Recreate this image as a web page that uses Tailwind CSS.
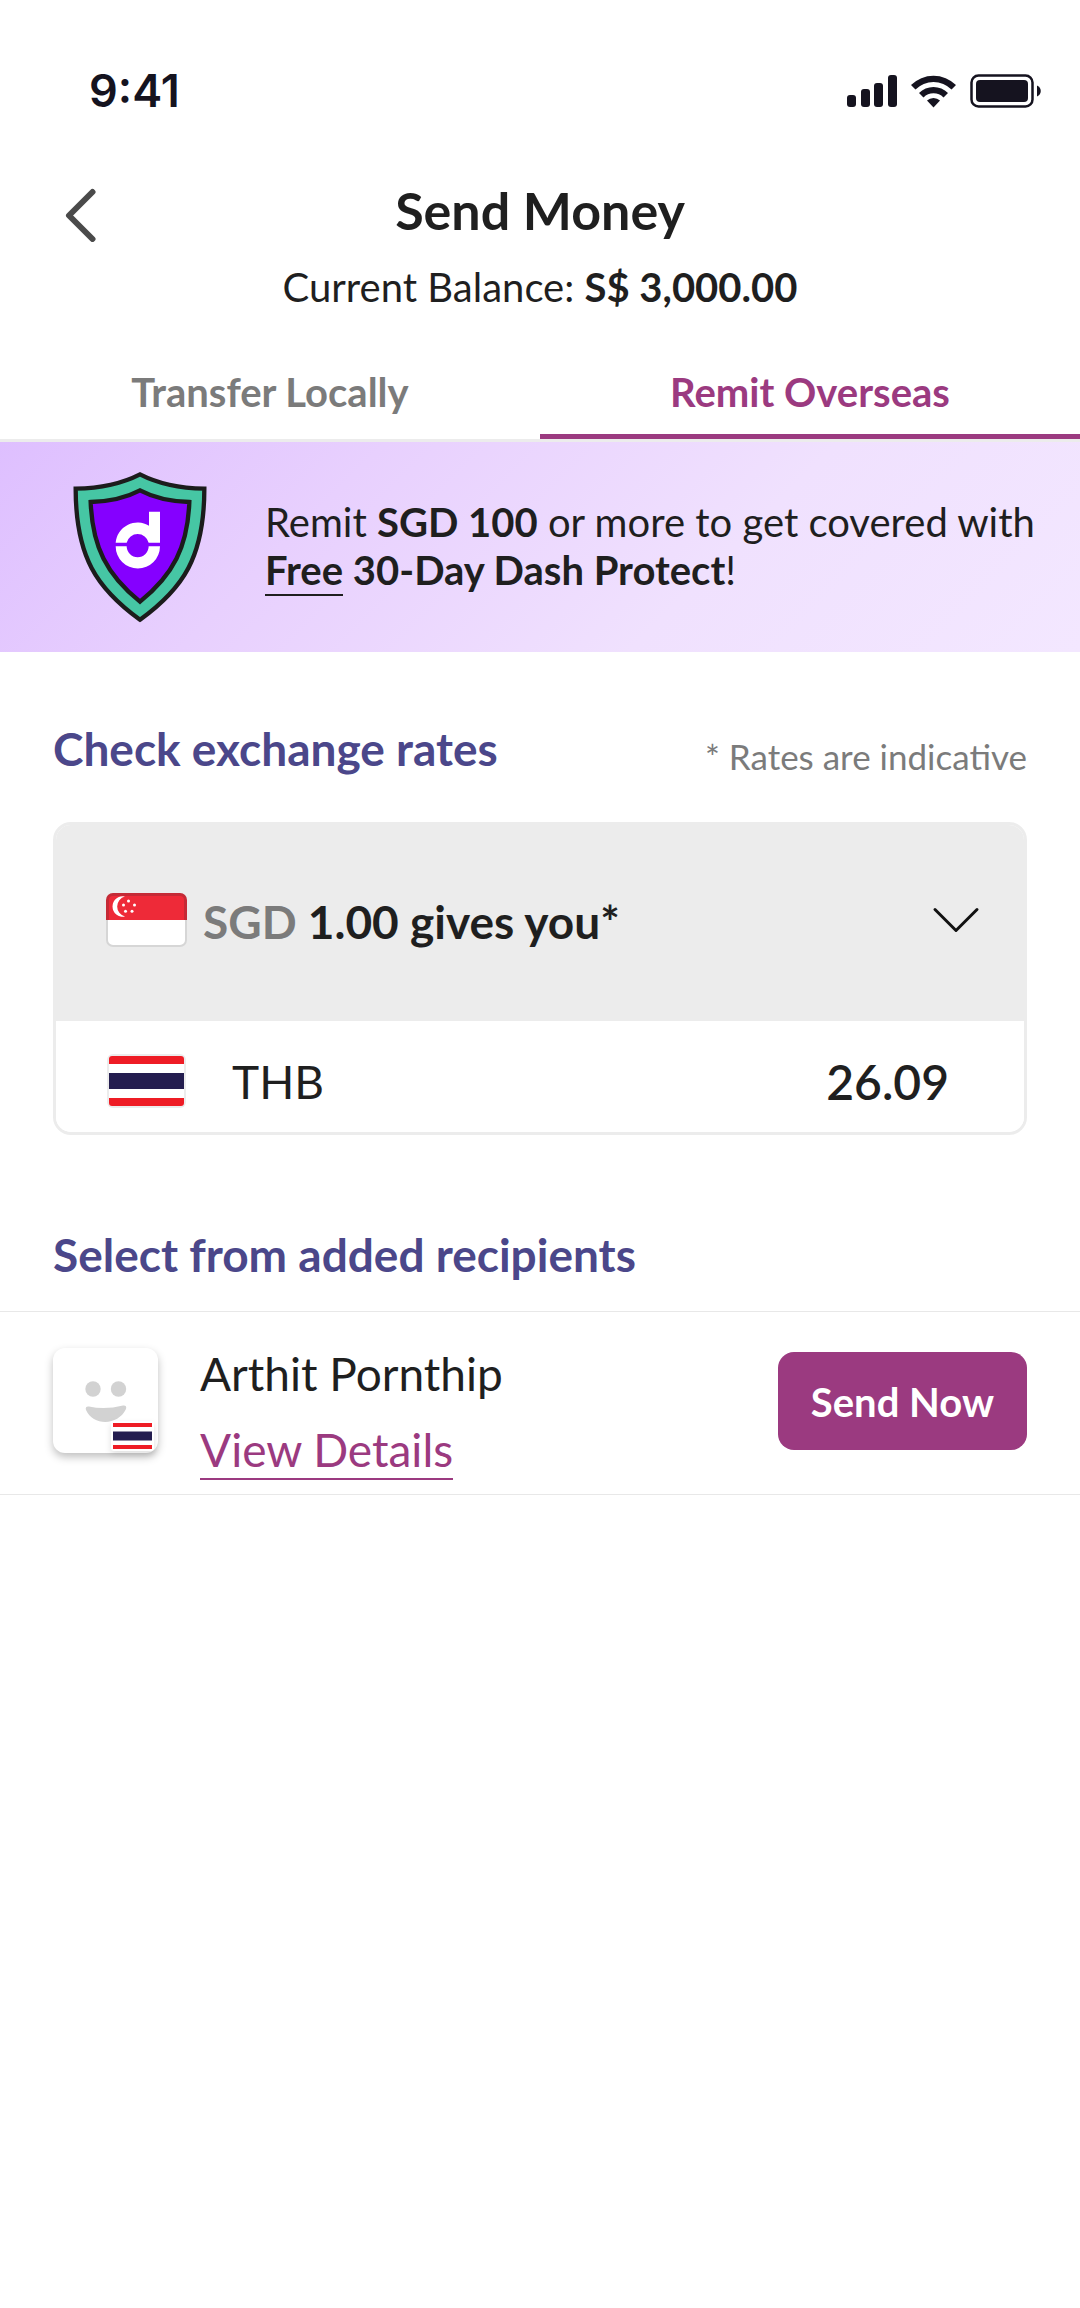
<!DOCTYPE html>
<html lang="en">
<head>
<meta charset="utf-8">
<meta name="viewport" content="width=device-width, initial-scale=1">
<title>Send Money</title>
<script src="https://cdn.jsdelivr.net/npm/@tailwindcss/browser@4"></script>
</head>
<body class="bg-white font-[Lato,sans-serif] text-[#1f1f1f]">
<svg class="hidden" aria-hidden="true">
  <symbol id="flag-th" viewBox="0 0 81 56">
    <rect x="1" y="1" width="79" height="54" rx="6" fill="#ececec"/>
    <rect x="3" y="3" width="75" height="50" rx="3" fill="#fff"/>
    <path d="M3 11V6a3 3 0 0 1 3-3h69a3 3 0 0 1 3 3v5zM3 45v5a3 3 0 0 0 3 3h69a3 3 0 0 0 3-3v-5z" fill="#ee1c25"/>
    <rect x="3" y="20" width="75" height="16" fill="#241d4f"/>
  </symbol>
</svg>

<div class="flex h-[178px] items-start justify-between pl-[89px] pr-[39px] pt-16">
  <time class="font-[Inter,sans-serif] text-[45px] font-semibold leading-[54px] text-[#15131f]">9:41</time>
  <svg class="mt-2.5 h-[34px] w-[194px]" viewBox="0 0 194 34" fill="#15131f" role="img" aria-label="Signal, Wi-Fi and battery">
    <rect x="0" y="21" width="9" height="12" rx="3"/>
    <rect x="14" y="15" width="9" height="18" rx="3"/>
    <rect x="27" y="9" width="9" height="24" rx="3"/>
    <rect x="41" y="1" width="9" height="32" rx="3"/>
    <path d="M64 11a32 32 0 0 1 45 0l-4.500 4.500a25.500 25.500 0 0 0-36 0z"/>
    <path d="M72 19a20.500 20.500 0 0 1 29 0l-4.500 4.500a14 14 0 0 0-20 0z"/>
    <path d="M80 26.500a9.500 9.500 0 0 1 13 0L86.500 33.500z"/>
    <rect x="124.500" y="1.500" width="61" height="31" rx="7" fill="none" stroke="#15131f" stroke-width="2.500"/>
    <rect x="129" y="6" width="52" height="22" rx="4"/>
    <path d="M190 11.500c5 2 5 9 0 11z"/>
  </svg>
</div>

<header class="grid grid-cols-[160px_1fr_160px]">
  <button type="button" aria-label="Back" class="flex items-start pl-16 pt-2.5">
    <svg class="h-[54px] w-8" viewBox="0 0 32 54" fill="none" stroke="#4a4a4a" stroke-width="6" stroke-linecap="round" stroke-linejoin="round"><path d="M28.500 4L5 27.500L28.500 51"/></svg>
  </button>
  <div class="flex flex-col gap-[21px] text-center">
    <h1 class="text-[52px] font-bold leading-[64px]">Send Money</h1>
    <p class="text-[40px] leading-[48px]">Current Balance: <b class="font-bold">S$ 3,000.00</b></p>
  </div>
</header>

<nav class="grid grid-cols-2 border-b-3 border-[#ececec] text-center text-[40px] font-bold leading-[48px]">
  <a href="#local" class="pb-[23px] pt-[57px] text-[#7b7b7b]">Transfer Locally</a>
  <a href="#overseas" aria-current="page" class="border-b-5 border-[#9b3a80] pb-[18px] pt-[57px] text-[#9b3a80]">Remit Overseas</a>
</nav>

<section class="flex h-[210px] items-center bg-[linear-gradient(135deg,#debfff_0%,#e8d0fe_30%,#f0e1fe_65%,#f3e7ff_100%)] pb-[3px] pl-[60px]">
  <svg class="mb-0.5 h-[170px] w-40 shrink-0" viewBox="0 0 480 510" role="img" aria-label="Dash Protect shield">
    <path d="M240 43Q160 84 47 86C47 290 110 385 240 479C370 385 433 290 433 86Q320 84 240 43Z" fill="#46c6a4" stroke="#1c1c1c" stroke-width="13"/>
    <path d="M240 91Q180 123 92 126C97 260 140 345 240 425C340 345 383 260 388 126Q300 123 240 91Z" fill="#8500ff" stroke="#1c1c1c" stroke-width="13"/>
    <path d="M167 248A66 66 0 0 1 267 197V155H300V248H266A34 34 0 0 0 200 248ZM167 259H200A33 33 0 0 0 266 259H300A66 66 0 0 1 167 259Z" fill="#fff"/>
  </svg>
  <p class="ml-[45px] pt-0.5 text-[40px] leading-[48px]">Remit <b>SGD 100</b> or more to get covered with<br><b><a href="#protect" class="inline-block border-b-2 border-[#1f1f1f]">Free</a> 30-Day Dash Protect</b>!</p>
</section>

<main>
  <section class="px-[53px] pt-[68px]">
    <div class="flex items-end justify-between">
      <h2 class="pb-[3px] pt-px text-[46px] font-bold leading-[56px] text-[#4b478a]">Check exchange rates</h2>
      <p class="text-[35px] leading-[48px] text-[#7b7b7b]">* Rates are indicative</p>
    </div>
    <div class="mt-[42px] overflow-hidden rounded-[18px] border-3 border-[#ececec]">
      <button type="button" aria-expanded="true" class="flex h-[196px] w-full items-center bg-[#ececec] pb-[3px] pl-[50px] pr-[44px] text-left text-[46px] font-bold leading-[56px]">
        <svg class="mb-1 h-[54px] w-[81px]" viewBox="0 0 81 54" role="img" aria-label="Singapore">
          <rect x="1" y="1" width="79" height="52" rx="6" fill="#fff" stroke="#d6d6d6" stroke-width="2"/>
          <path d="M0 27V7a7 7 0 0 1 7-7h67a7 7 0 0 1 7 7v20z" fill="#c52a36"/>
          <path d="M3 27V7a4 4 0 0 1 4-4h67a4 4 0 0 1 4 4v20z" fill="#ee2a38"/>
          <path d="M19 3.500A10.250 10.250 0 1 0 19 23.500A10.300 10.300 0 0 1 19 3.500z" fill="#fff"/>
          <g fill="#fff"><circle cx="22.500" cy="8" r="1.500"/><circle cx="17.500" cy="12" r="1.500"/><circle cx="28.500" cy="12" r="1.500"/><circle cx="19.500" cy="18.300" r="1.500"/><circle cx="26" cy="18.300" r="1.500"/></g>
        </svg>
        <span class="ml-4"><span class="text-[#7b7b7b]">SGD</span> 1.00 gives you*</span>
        <svg class="mb-1 ml-auto h-[26px] w-12" viewBox="0 0 48 26" fill="none" stroke="#111" stroke-width="3" stroke-linecap="round" stroke-linejoin="round" aria-hidden="true"><path d="M3 2.500L24 23.500L45 2.500"/></svg>
      </button>
      <div class="flex items-center bg-white pb-[22px] pl-[50px] pr-[75px] pt-[33px] text-[46px] leading-[56px]">
        <svg class="-mt-0.5 h-14 w-[81px]" role="img" aria-label="Thailand"><use href="#flag-th"/></svg>
        <span class="ml-[45px]">THB</span>
        <span class="ml-auto text-[48px] font-semibold">26.09</span>
      </div>
    </div>
  </section>

  <section class="pt-[92px]">
    <h2 class="px-[53px] text-[46px] font-bold leading-[56px] text-[#4b478a]">Select from added recipients</h2>
    <ul class="mt-7 border-y border-[#e8e8e8]">
      <li class="flex items-start px-[53px] pb-3.5 pt-[34px]">
        <div class="relative mt-0.5 size-[105px] rounded-xl bg-white shadow-[0_4px_8px_rgba(0,0,0,0.25)]">
          <svg class="size-[105px]" viewBox="0 0 105 105" fill="#d2d2d2" role="img" aria-label="Recipient picture">
            <circle cx="40" cy="41" r="7.700"/><circle cx="65.500" cy="41" r="7.700"/>
            <path d="M33 62c-1-3 1-4 3-3.500q16 3.500 34-1c2-.5 4 .5 3 3.500c-8 17-33 17-40 1z"/>
          </svg>
          <svg class="absolute bottom-0.5 right-1 h-[30px] w-[43px] drop-shadow-md" viewBox="0 0 43 30" role="img" aria-label="Thailand">
            <rect width="43" height="30" rx="3" fill="#fff"/>
            <path d="M2 2h39v4H2zM2 24h39v4H2z" fill="#ee1c25"/>
            <path d="M2 10.500h39v9H2z" fill="#241d4f"/>
          </svg>
        </div>
        <div class="ml-[42px] flex flex-col items-start gap-5 text-[46px] leading-[56px]">
          <h3>Arthit Pornthip</h3>
          <a href="#details" class="border-b-2 border-[#9b3a80] text-[#9b3a80]">View Details</a>
        </div>
        <button type="button" class="ml-auto mt-1.5 rounded-2xl bg-[#9b3a80] px-[33px] pb-6 pt-[26px] text-[40px] font-bold leading-[48px] text-white">Send Now</button>
      </li>
    </ul>
  </section>
</main>
</body>
</html>
